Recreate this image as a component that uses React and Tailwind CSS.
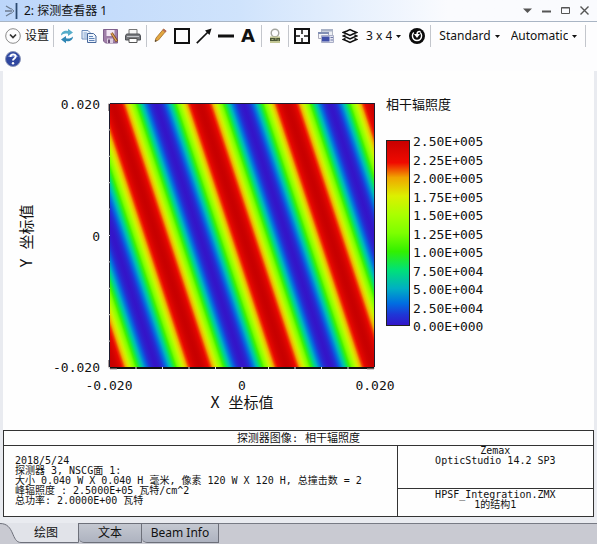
import { useState } from "react";

const colorStops = [
  [0, 52, 20, 200],
  [0.06, 30, 55, 215],
  [0.12, 0, 110, 225],
  [0.2, 0, 175, 195],
  [0.3, 0, 225, 120],
  [0.4, 50, 240, 0],
  [0.5, 125, 255, 0],
  [0.6, 170, 255, 0],
  [0.7, 220, 240, 0],
  [0.8, 240, 165, 0],
  [0.88, 240, 10, 0],
  [1, 200, 0, 0],
];

const legendLabels = [
  "2.50E+005",
  "2.25E+005",
  "2.00E+005",
  "1.75E+005",
  "1.50E+005",
  "1.25E+005",
  "1.00E+005",
  "7.50E+004",
  "5.00E+004",
  "2.50E+004",
  "0.00E+000",
];

const details = [
  "2018/5/24",
  "探测器 3, NSCG面 1:",
  "大小 0.040 W X 0.040 H 毫米, 像素 120 W X 120 H, 总撞击数 = 2",
  "峰辐照度 : 2.5000E+05 瓦特/cm^2",
  "总功率: 2.0000E+00 瓦特",
];

function toColor(value) {
  const i = Math.max(
    1,
    colorStops.findIndex((s) => s[0] >= value)
  );
  const a = colorStops[i - 1];
  const b = colorStops[i];
  const t = (value - a[0]) / (b[0] - a[0]);
  const mix = (k) => Math.round(a[k] + (b[k] - a[k]) * t);
  return `rgb(${mix(1)},${mix(2)},${mix(3)})`;
}

// one fringe period, dark to dark
const fringe = Array.from({ length: 41 }, (_, i) => {
  const offset = i / 40;
  const value = (1 - Math.cos(2 * Math.PI * offset)) / 2;
  return { offset, color: toColor(Math.min(1, value)) };
});

const PERIOD = 87;
const SLOPE = 0.33;
const gx = PERIOD / (1 + SLOPE * SLOPE);
const gy = -SLOPE * gx;

function Separator() {
  return <span className="w-px h-[22px] mx-[5px] bg-[#c3c6cc]" />;
}

function ToolButton({ label, children }) {
  return (
    <button type="button" aria-label={label} title={label} className="block">
      <svg viewBox="0 0 16 16" className="block w-4 h-4" fill="none">
        {children}
      </svg>
    </button>
  );
}

function ToolSelect({ label, options }) {
  return (
    <span className="relative flex items-center">
      <select
        aria-label={label}
        className="appearance-none bg-transparent pr-[9px] leading-4 [field-sizing:content] outline-none"
      >
        {options.map((o) => (
          <option key={o}>{o}</option>
        ))}
      </select>
      <svg
        viewBox="0 0 5 3"
        className="absolute right-0 w-[5px] h-[3px] pointer-events-none"
      >
        <path d="M0 0h5L2.500 3z" fill="#111" />
      </svg>
    </span>
  );
}

function TitleBar() {
  return (
    <div className="flex items-center h-[22px] pl-[5px] pr-2 border-b border-[#a9b5c4] bg-linear-to-r from-[#bcd6fa] via-[#cfe3fc] via-40% to-[#fafbfe] to-75%">
      <svg viewBox="0 0 14 16" className="w-[14px] h-4" fill="none">
        <path d="M1 3l5 3M0 8h7M1 13l5-3" stroke="#6d7c90" strokeWidth="1.300" />
        <path d="M6 5.500L9 8l-3 2.500" stroke="#6d7c90" />
        <path d="M11.500 0v16" stroke="#2c4a70" strokeWidth="1.800" />
      </svg>
      <h1 className="ml-[5px] text-xs">2: 探测查看器 1</h1>
      <div className="ml-auto flex items-center gap-[10px] text-[#555]">
        <button type="button" aria-label="Menu">
          <svg viewBox="0 0 9 9" className="w-[9px] h-[9px]">
            <path d="M0 2.500h9L4.500 7z" fill="currentColor" />
          </svg>
        </button>
        <button type="button" aria-label="Minimize">
          <svg viewBox="0 0 9 9" className="w-[9px] h-[9px]">
            <path d="M0 4.500h9v2H0z" fill="currentColor" />
          </svg>
        </button>
        <button type="button" aria-label="Maximize">
          <svg viewBox="0 0 9 9" className="w-[9px] h-[9px]" fill="none">
            <path d="M.5 1.500h8v6h-8zM.5 2h8" stroke="currentColor" />
          </svg>
        </button>
        <button type="button" aria-label="Close">
          <svg viewBox="0 0 9 9" className="w-[9px] h-[9px]" fill="none">
            <path d="M.5.5l8 8M8.500.5l-8 8" stroke="currentColor" strokeWidth="1.400" />
          </svg>
        </button>
      </div>
    </div>
  );
}

function Toolbar() {
  return (
    <div className="pl-[5px] pt-[3px] text-xs">
      <div className="flex items-center h-[22px] whitespace-nowrap">
        <button type="button" className="flex items-center gap-1 -mr-px">
          <svg viewBox="0 0 16 16" className="w-4 h-4" fill="none">
            <circle cx="8" cy="8" r="7.300" stroke="#8b8b8b" />
            <path d="M5 6.500l3 3 3-3" stroke="#333" strokeWidth="1.700" />
          </svg>
          设置
        </button>
        <Separator />
        <div className="flex gap-[6px]">
          <ToolButton label="Refresh">
            <path d="M2 7.500C2 4 5.500 2 9 3V.8L14 4.500 9 8V5.800C6.500 5 4 5.500 2 7.500z" fill="#55adca" />
            <path d="M14 8.500c0 3.500-3.500 5.500-7 4.500v2.200L2 11.500 7 8v2.200c2.500.8 5 .3 7-1.700z" fill="#2f86b4" />
          </ToolButton>
          <ToolButton label="Copy">
            <path d="M1 2.500h6l2 2V11H1z" fill="#eef4fc" stroke="#6c8cbb" />
            <path d="M2.500 5H6M2.500 7H6M2.500 9H6" stroke="#7fa0cd" />
            <path d="M6.500 5.500h6l2.500 2.500v6.500H6.500z" fill="#eef4fc" stroke="#48699c" />
            <path d="M8 8.500h4M8 10.500h5.500M8 12.500h5.500" stroke="#5f83b8" />
          </ToolButton>
          <ToolButton label="Save">
            <path d="M.5 1.500h14V15H2.500l-2-2z" fill="#a07fa8" stroke="#80608c" />
            <path d="M3.500 2h8v6h-8z" fill="#f3e7f4" />
            <path d="M4 10.500h6V15H4z" fill="#dccde0" />
            <path d="M5 11.500h2V15H5z" fill="#6c4f78" />
            <path d="M8.500 5l5.500 8.500" stroke="#7b4a22" strokeWidth="2.800" />
            <path d="M8.500 5l5 8" stroke="#e2a557" strokeWidth="1.400" />
          </ToolButton>
          <ToolButton label="Print">
            <path d="M4 1.500h8V7H4z" fill="#f5f5f5" stroke="#777" />
            <path d="M1.500 6h13l1 2v4H.5V8z" fill="#77797d" stroke="#4e5055" />
            <path d="M2 8.500h12" stroke="#c4c6ca" />
            <path d="M4 10.500h8v4H4z" fill="#fff" stroke="#555" />
          </ToolButton>
        </div>
        <Separator />
        <div className="flex gap-[6px]">
          <ToolButton label="Pencil">
            <path d="M3 13.500L4 10l7.500-9 2.500 2-7.500 9z" fill="#e3a740" stroke="#a06d2a" strokeWidth=".8" />
            <path d="M11 1.500l3 2.300" stroke="#b66b55" strokeWidth="2" />
            <path d="M3 13.800l.6-2 1.300 1.100z" fill="#333" />
          </ToolButton>
          <ToolButton label="Rectangle">
            <path d="M1 1h14v14H1z" stroke="#111" strokeWidth="2" />
          </ToolButton>
          <ToolButton label="Arrow">
            <path d="M.8 15.200L12 4" stroke="#111" strokeWidth="1.700" />
            <path d="M9 2.500L15.500.5l-2 6.500z" fill="#111" />
          </ToolButton>
          <ToolButton label="Line">
            <path d="M0 8h16" stroke="#111" strokeWidth="3" />
          </ToolButton>
          <button
            type="button"
            aria-label="Text"
            className="w-4 h-4 text-lg leading-4 font-bold font-['DejaVu_Sans',sans-serif] text-center"
          >
            A
          </button>
        </div>
        <Separator />
        <ToolButton label="Lock">
          <circle cx="8" cy="5" r="3.800" stroke="#a3a59f" strokeWidth="1.400" />
          <path d="M3 8.500h10V15H3z" fill="#c3c795" />
          <path d="M3 10h10v3H3z" fill="#4c5838" />
          <path d="M4.500 11.500h2M8 11h1.500M10.500 12h1.500" stroke="#aab07e" />
        </ToolButton>
        <Separator />
        <div className="flex items-center gap-2">
          <ToolButton label="Fit window">
            <path d="M1 1h14v14H1z" stroke="#111" strokeWidth="2" />
            <path d="M8 2v4M8 10v4M2 8h4M10 8h4" stroke="#111" strokeWidth="1.500" />
          </ToolButton>
          <ToolButton label="Windows">
            <path d="M3.500 1.500h11v8h-11z" fill="#eef0f4" stroke="#b3b7c4" />
            <path d="M3 1h12v2.500H3z" fill="#a9b2c6" />
            <path d="M.5 4.500h10v6H.5z" fill="#f4f5f8" stroke="#aab" />
            <path d="M0 4h11v2H0z" fill="#8290b4" />
            <path d="M3.500 7.500h12v7h-12z" fill="#e4e6f0" stroke="#a9aec6" />
            <path d="M4 8.500h7.500v5H4z" fill="#4050a8" />
            <path d="M12.500 9.500H15M12.500 12H15" stroke="#6c76a8" />
          </ToolButton>
          <ToolButton label="Layers">
            <path
              d="M1 4.500l4-1.500 3-1.500L11 3l4 1.500L11 6 8 7.500 5 6zM3.500 7L1 8l4 1.500L8 11l3-1.500L15 8l-2.500-1M3.500 10.500L1 11.500 5 13l3 1.500 3-1.500 4-1.500-2.500-1"
              stroke="#111"
              strokeWidth="1.400"
            />
          </ToolButton>
          <ToolSelect label="Grid" options={["3 x 4"]} />
          <ToolButton label="Reset">
            <circle cx="8" cy="8" r="8" fill="#0b0b0b" />
            <path d="M4.800 4.600a4.600 4.600 0 1 0 6.400 0" stroke="#fff" strokeWidth="1.400" />
            <path d="M11.500 3.800C9.500 3 8 4 8 6.500" stroke="#fff" strokeWidth="1.500" />
            <path d="M5 6h6L8 10z" fill="#fff" />
          </ToolButton>
        </div>
        <Separator />
        <div className="flex gap-[11px] px-[3px]">
          <ToolSelect label="Style" options={["Standard"]} />
          <ToolSelect label="Scale" options={["Automatic"]} />
        </div>
        <Separator />
      </div>
      <div className="flex items-center h-[24px]">
        <ToolButton label="Help">
          <circle cx="8" cy="8" r="7.500" fill="#2f479f" stroke="#8c97b8" />
          <path d="M2.500 6a6 5 0 0 1 11 0z" fill="#6c82cc" />
          <path
            d="M5.500 6c0-3.500 5.500-3.300 5.200-.4C10.500 7.500 8 7.400 8 9.500"
            stroke="#fff"
            strokeWidth="1.900"
          />
          <circle cx="8" cy="12.200" r="1.200" fill="#fff" />
        </ToolButton>
      </div>
    </div>
  );
}

function DetectorPlot() {
  return (
    <svg
      viewBox="0 0 591 359"
      className="block w-full font-['DejaVu_Sans_Mono','Noto_Sans_CJK_SC',monospace]"
      role="img"
      aria-label="相干辐照度"
    >
      <defs>
        <linearGradient
          id="fringes"
          gradientUnits="userSpaceOnUse"
          spreadMethod="repeat"
          x1="153"
          y1="32"
          x2={153 + gx}
          y2={32 + gy}
        >
          {fringe.map((s) => (
            <stop key={s.offset} offset={s.offset} stopColor={s.color} />
          ))}
        </linearGradient>
        <linearGradient id="scale" x1="0" y1="1" x2="0" y2="0">
          {colorStops.map(([offset, r, g, b]) => (
            <stop key={offset} offset={offset} stopColor={`rgb(${r},${g},${b})`} />
          ))}
        </linearGradient>
      </defs>

      <rect x="106" y="32" width="266" height="264" fill="url(#fringes)" />
      <path d="M106.500 296V32.500h265V296" fill="none" stroke="#1c1c30" />
      <path d="M106 297h266" stroke="#111" strokeWidth="2" />
      {Array.from({ length: 11 }, (_, i) => (
        <g key={i} stroke="#ddd">
          <path d={`M${106.5 + i * 26.5} 296v2`} />
          <path d={`M105 ${32.5 + i * 26.4}h2`} />
        </g>
      ))}
      <path d="M105.500 33v7M105.500 289v7M107 298h7M364 298h7" stroke="#a89a9a" />

      <g fontSize="13" fill="#111">
        <g textAnchor="end">
          <text x="97" y="38">0.020</text>
          <text x="97" y="170">0</text>
          <text x="97" y="301">-0.020</text>
        </g>
        <g textAnchor="middle">
          <text x="106" y="319">-0.020</text>
          <text x="239" y="319">0</text>
          <text x="372" y="319">0.020</text>
        </g>
        <text x="383" y="38">相干辐照度</text>
        {legendLabels.map((label, i) => (
          <text key={label} x="410" y={75 + Math.round(i * 18.5)}>
            {label}
          </text>
        ))}
      </g>
      <g fontSize="15" fill="#111" textAnchor="middle">
        <text x="239" y="337">X 坐标值</text>
        <text transform="translate(29 165) rotate(-90)">Y 坐标值</text>
      </g>
      <rect x="383.500" y="69.500" width="23" height="185" fill="url(#scale)" stroke="#222" />
    </svg>
  );
}

function InfoPanel() {
  return (
    <div className="border border-[#333] text-[10px] leading-[10px] font-['DejaVu_Sans_Mono','Noto_Sans_CJK_SC',monospace]">
      <h2 className="h-[15px] border-b border-[#333] text-center text-[11px] leading-[15px]">
        探测器图像: 相干辐照度
      </h2>
      <div className="grid grid-cols-[2fr_1fr]">
        <div className="pl-[11px] py-[10px] whitespace-nowrap">
          {details.map((line) => (
            <p key={line}>{line}</p>
          ))}
        </div>
        <div className="flex flex-col border-l border-[#333] text-center">
          <div className="flex-1">
            <p>Zemax</p>
            <p>OpticStudio 14.2 SP3</p>
          </div>
          <div className="h-[28px] pt-px border-t border-[#333]">
            <p>HPSF_Integration.ZMX</p>
            <p>1的结构1</p>
          </div>
        </div>
      </div>
    </div>
  );
}

function Tabs() {
  const [active, setActive] = useState("绘图");
  const tabs = [
    { name: "绘图", width: "w-[79px]", pad: "pl-[13px]" },
    { name: "文本", width: "w-[63px]", pad: "" },
    { name: "Beam Info", width: "w-[77px]", pad: "" },
  ];

  return (
    <div role="tablist" className="flex h-[21px] bg-[#c9cad2] text-xs">
      {tabs.map((tab) => (
        <button
          key={tab.name}
          type="button"
          role="tab"
          aria-selected={active === tab.name}
          onClick={() => setActive(tab.name)}
          className={`relative h-[20px] ${tab.width} ${tab.pad} ${
            active === tab.name
              ? ""
              : "bg-linear-to-b from-[#c4c8d1] to-[#aeb3c0] border-t border-r border-b border-[#6d707a] rounded-bl-[5px]"
          }`}
        >
          {active === tab.name && (
            <svg
              viewBox="0 0 79 20"
              preserveAspectRatio="none"
              className="absolute inset-0 w-full h-full"
              fill="none"
            >
              <path d="M0 0h79v19.500H21C11 19.500 15 .5 0 .5z" fill="#e1e3e9" />
              <path d="M0 .5C15 .5 11 19.500 21 19.500h57.500V0" stroke="#6d707a" />
            </svg>
          )}
          <span className="relative">{tab.name}</span>
        </button>
      ))}
      <div className="flex-1 border-t border-[#777a84]" />
    </div>
  );
}

export default function App() {
  return (
    <div className="bg-[#e9ebf0] text-[#111] font-['Noto_Sans','Noto_Sans_CJK_SC',sans-serif]">
      <TitleBar />
      <div className="bg-[#fdfdfe]">
        <Toolbar />
      </div>
      <div className="mx-[3px] bg-[#fefefe]">
        <DetectorPlot />
        <InfoPanel />
      </div>
      <div className="h-[6px]" />
      <Tabs />
    </div>
  );
}
